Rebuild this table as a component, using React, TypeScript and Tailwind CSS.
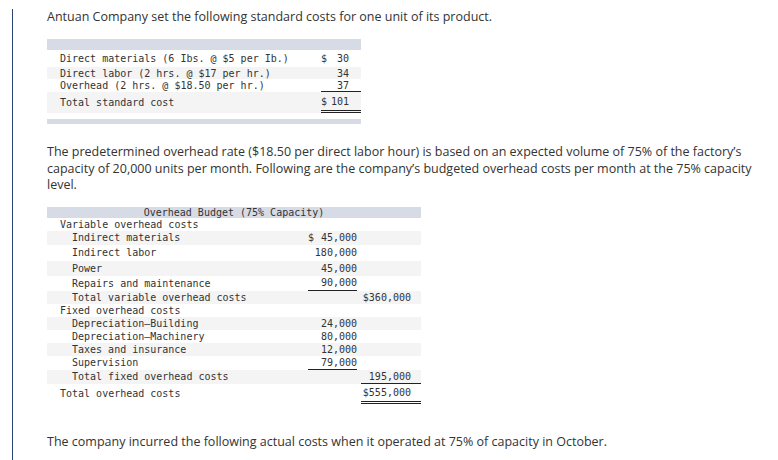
import React from "react";

const mono = "font-['DejaVu_Sans_Mono','Liberation_Mono',monospace] text-[10px] text-[#333]";

type Row = {
    label: string;
    indent?: boolean;
    mid?: string;
    right?: string;
    midLine?: boolean;
    rightLine?: boolean;
    rightDouble?: boolean;
    h: string;
};

const budget: Row[] = [
    { label: "Variable overhead costs", h: "h-[13px]" },
    { label: "Indirect materials", indent: true, mid: "$ 45,000", h: "h-[14px]" },
    { label: "Indirect labor", indent: true, mid: "180,000", h: "h-[16px]" },
    { label: "Power", indent: true, mid: "45,000", h: "h-[15px]" },
    { label: "Repairs and maintenance", indent: true, mid: "90,000", midLine: true, h: "h-[15px]" },
    { label: "Total variable overhead costs", indent: true, right: "$360,000", h: "h-[13px]" },
    { label: "Fixed overhead costs", h: "h-[13px]" },
    { label: "Depreciation—Building", indent: true, mid: "24,000", h: "h-[13px]" },
    { label: "Depreciation—Machinery", indent: true, mid: "80,000", h: "h-[13px]" },
    { label: "Taxes and insurance", indent: true, mid: "12,000", h: "h-[13px]" },
    { label: "Supervision", indent: true, mid: "79,000", midLine: true, h: "h-[14px]" },
    { label: "Total fixed overhead costs", indent: true, right: "195,000", rightLine: true, h: "h-[14px]" },
    { label: "Total overhead costs", right: "$555,000", rightDouble: true, h: "h-[20px]" },
];

function Money({ value }: { value: string }) {
    // "$ 45,000" keeps the sign at the left edge of the cell
    if (value.startsWith("$ ")) {
        return (
            <span className="flex justify-between w-full">
                <span>$</span>
                <span>{value.slice(2)}</span>
            </span>
        );
    }
    return <span className="block w-full text-right">{value}</span>;
}

export default function App() {
    return (
        <div className="w-[778px] h-[460px] overflow-hidden bg-white pt-[9px] pl-[12px] font-['Open_Sans',sans-serif] text-[#333]">
            <div className="h-full border-l border-[#2a4574] pl-[34px]">
                <p className="text-[12.5px] leading-[16px]">
                    Antuan Company set the following standard costs for one unit of its product.
                </p>

                {/* Standard cost card */}
                <div className={`mt-[14px] w-[314px] ${mono}`}>
                    <div className="h-[11px] bg-[#d7dbe5]" />
                    <div className="flex items-center h-[17px]">
                        <span className="flex-1 pl-[13px]">Direct materials (6 Ibs. @ $5 per Ib.)</span>
                        <span className="w-[40px] pr-[12px] flex">
                            <Money value="$ 30" />
                        </span>
                    </div>
                    <div className="flex items-center h-[12px] bg-[#f4f4f4]">
                        <span className="flex-1 pl-[13px]">Direct labor (2 hrs. @ $17 per hr.)</span>
                        <span className="w-[40px] pr-[12px] flex">
                            <Money value="34" />
                        </span>
                    </div>
                    <div className="flex items-stretch h-[13px]">
                        <span className="flex-1 pl-[13px] flex items-center">Overhead (2 hrs. @ $18.50 per hr.)</span>
                        <span className="w-[40px] pr-[12px] flex items-center border-b border-[#222]">
                            <Money value="37" />
                        </span>
                    </div>
                    <div className="flex items-stretch h-[21px] bg-[#f4f4f4]">
                        <span className="flex-1 pl-[13px] flex items-center">Total standard cost</span>
                        <span className="w-[40px] pr-[12px] flex items-center border-b-[3px] border-double border-[#222]">
                            <Money value="$ 101" />
                        </span>
                    </div>
                    <div className="h-[5px] mt-[6px] bg-[#d7dbe5]" />
                </div>

                <p className="mt-[20px] text-[12.5px] leading-[16.5px] w-[718px]">
                    The predetermined overhead rate ($18.50 per direct labor hour) is based on an expected volume of
                    75% of the factory’s capacity of 20,000 units per month. Following are the company’s budgeted
                    overhead costs per month at the 75% capacity level.
                </p>

                {/* Overhead budget */}
                <div className={`mt-[13px] w-[374px] ${mono}`}>
                    <div className="h-[11px] bg-[#d7dbe5] flex items-center justify-center">
                        Overhead Budget (75% Capacity)
                    </div>
                    {budget.map((row, i) => (
                        <div
                            key={row.label}
                            className={`flex items-stretch ${row.h} ${i % 2 === 1 ? "bg-[#f4f4f4]" : ""}`}
                        >
                            <span className={`flex-1 flex items-center ${row.indent ? "pl-[25px]" : "pl-[13px]"}`}>
                                {row.label}
                            </span>
                            <span
                                className={`w-[49px] flex items-center ${row.midLine ? "border-b border-[#222]" : ""}`}
                            >
                                {row.mid && <Money value={row.mid} />}
                            </span>
                            <span className="w-[4px]" />
                            <span
                                className={`w-[60px] pr-[10px] flex items-center ${
                                    row.rightLine ? "border-b border-[#222]" : ""
                                } ${row.rightDouble ? "border-b-[3px] border-double border-[#222]" : ""}`}
                            >
                                {row.right && <Money value={row.right} />}
                            </span>
                        </div>
                    ))}
                </div>

                <p className="mt-[30px] text-[12.5px] leading-[16px]">
                    The company incurred the following actual costs when it operated at 75% of capacity in October.
                </p>
            </div>
        </div>
    );
}
